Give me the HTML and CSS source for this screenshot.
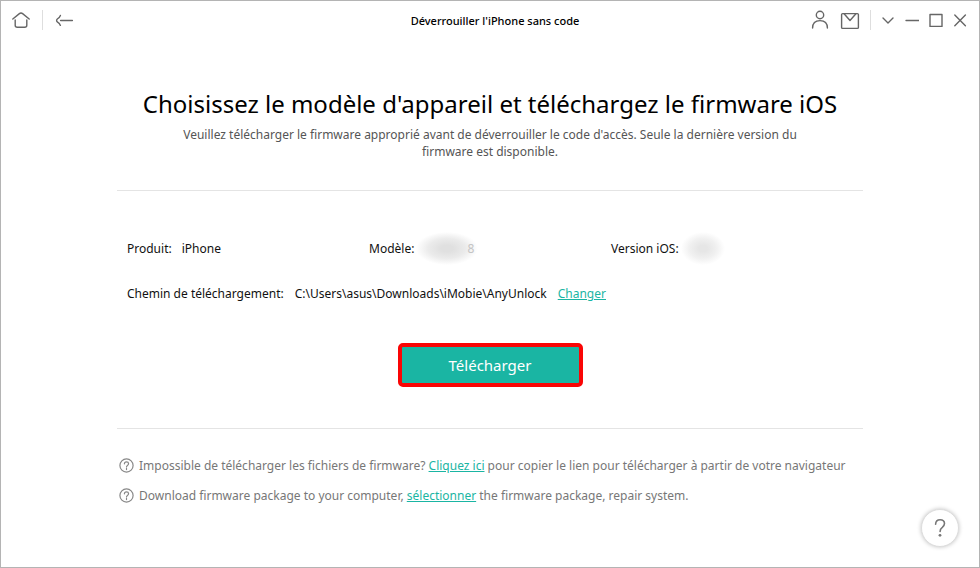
FILE: index.html
```html
<!DOCTYPE html>
<html lang="fr">
<head>
  <meta charset="UTF-8">
  <meta name="viewport" content="width=device-width, initial-scale=1.0">
  <title>Déverrouiller l'iPhone sans code</title>
  <link rel="stylesheet" href="styles.css">
</head>
<body>
  <div class="window">
    <header class="titlebar">
      <div class="nav">
        <button class="icon-btn" aria-label="Accueil">
          <svg width="20" height="20" viewBox="0 0 20 20"><path d="M1.8 9 8.4 3.6Q10 2.3 11.6 3.6L18.2 9M4.2 10v5.2q0 2 2 2h7.6q2 0 2-2V10"/></svg>
        </button>
        <span class="divider"></span>
        <button class="icon-btn" aria-label="Retour">
          <svg width="20" height="20" viewBox="0 0 20 20"><path d="M6.4 5.4Q5.6 7.4 3.6 8.8 1.6 10.5 3.6 12.2 5.6 13.4 6.4 15.4M6.6 10.5H18.4"/></svg>
        </button>
      </div>
      <h1 class="title">Déverrouiller l'iPhone sans code</h1>
      <div class="tools">
        <button class="icon-btn" aria-label="Compte">
          <svg width="20" height="20" viewBox="0 0 20 20"><circle cx="10" cy="5" r="3.7"/><path d="M2.6 18q0-7.4 7.4-7.4t7.4 7.4"/></svg>
        </button>
        <button class="icon-btn" aria-label="Messages">
          <svg width="20" height="20" viewBox="0 0 20 20"><rect x="1.6" y="3.6" width="16.8" height="14.8" rx="1"/><path d="m4.3 4 5.7 6.5L15.7 4"/></svg>
        </button>
        <span class="divider"></span>
        <button class="icon-btn" aria-label="Menu">
          <svg width="14" height="14" viewBox="0 0 14 14"><path d="m2 5 5 5 5-5"/></svg>
        </button>
        <button class="icon-btn" aria-label="Réduire">
          <svg width="14" height="14" viewBox="0 0 14 14"><path d="M1 7.5h13"/></svg>
        </button>
        <button class="icon-btn" aria-label="Agrandir">
          <svg width="14" height="14" viewBox="0 0 14 14"><rect x="1" y="1.5" width="12" height="12"/></svg>
        </button>
        <button class="icon-btn" aria-label="Fermer">
          <svg width="14" height="14" viewBox="0 0 14 14"><path d="m1.8 2 10.6 10.8M12.4 2 1.8 12.8"/></svg>
        </button>
      </div>
    </header>

    <main class="content">
      <section class="intro">
        <h2>Choisissez le modèle d'appareil et téléchargez le firmware iOS</h2>
        <p>Veuillez télécharger le firmware approprié avant de déverrouiller le code d'accès. Seule la dernière version du firmware est disponible.</p>
      </section>

      <section class="details">
        <div class="specs">
          <div class="spec"><span>Produit:</span><span>iPhone</span></div>
          <div class="spec masked"><span>Modèle:</span><span class="mask">8</span></div>
          <div class="spec masked"><span>Version iOS:</span><span class="mask mask-small"></span></div>
        </div>
        <div class="path">
          <span>Chemin de téléchargement:</span>
          <span>C:\Users\asus\Downloads\iMobie\AnyUnlock</span>
          <a href="#">Changer</a>
        </div>
        <button class="download">Télécharger</button>
      </section>

      <section class="hints">
        <p>
          <svg class="hint-icon" width="15" height="15" viewBox="0 0 15 15"><circle cx="7.5" cy="7.5" r="6.6"/><path d="M5.4 5.8q.1-2 2.1-2t2.1 1.8q0 1-1.1 1.8-1 .7-1 1.6M7.5 10.4v1.2"/></svg>
          <span>Impossible de télécharger les fichiers de firmware? <a href="#">Cliquez ici</a> pour copier le lien pour télécharger à partir de votre navigateur</span>
        </p>
        <p>
          <svg class="hint-icon" width="15" height="15" viewBox="0 0 15 15"><circle cx="7.5" cy="7.5" r="6.6"/><path d="M5.4 5.8q.1-2 2.1-2t2.1 1.8q0 1-1.1 1.8-1 .7-1 1.6M7.5 10.4v1.2"/></svg>
          <span>Download firmware package to your computer, <a href="#">sélectionner</a> the firmware package, repair system.</span>
        </p>
      </section>
    </main>

    <button class="help" aria-label="Aide">
      <svg width="20" height="20" viewBox="0 0 20 20"><path d="M5.6 6.2q.2-4.4 4.5-4.4t4.4 3.8q0 1.9-2.2 3.7-2.2 1.7-2.2 4.1"/><circle class="dot" cx="10" cy="17.3" r="1.4"/></svg>
    </button>
  </div>
</body>
</html>
```
FILE: styles.css
```css
* {
  box-sizing: border-box;
}
body {
  margin: 0;
  font-family: "Noto Sans", "Open Sans", sans-serif;
  font-size: 12px;
  line-height: 17px;
  color: #111;
  background: #fff;
}
h1, h2, p {
  margin: 0;
}
a {
  color: #1ab5a3;
  text-decoration: underline;
}
button {
  padding: 0;
  border: none;
  background: none;
  font-family: inherit;
  cursor: pointer;
}
svg {
  display: block;
  fill: none;
  stroke: #666;
  stroke-width: 1.4;
  stroke-linecap: round;
  stroke-linejoin: round;
}
.window {
  min-height: 100vh;
  border: 1px solid #b4b4b4;
}

/* title bar */
.titlebar {
  display: grid;
  grid-template-columns: 1fr auto 1fr;
  align-items: center;
  height: 38px;
  padding: 0 12px 0 10px;
}
.nav,
.tools {
  display: flex;
  align-items: center;
  gap: 11px;
}
.tools {
  justify-content: flex-end;
  gap: 10px;
}
.divider {
  width: 1px;
  height: 20px;
  background: #dedede;
}
.title {
  padding-left: 12px;
  font-size: 11px;
  font-weight: 500;
  color: #000;
}

/* main panel */
.content {
  max-width: 746px;
  margin: 0 auto;
}
.intro {
  padding: 48px 0 30px;
  text-align: center;
  border-bottom: 1px solid #e4e4e4;
}
.intro h2 {
  margin: 0 0 5px;
  font-size: 24px;
  line-height: 34px;
  font-weight: 400;
  color: #000;
}
.intro p {
  max-width: 650px;
  margin: 0 auto;
  color: #555;
}
.details {
  padding: 49px 10px 41px;
  border-bottom: 1px solid #e4e4e4;
}
.specs {
  display: grid;
  grid-template-columns: 1fr 1fr 1fr;
}
.spec {
  display: flex;
  gap: 10px;
}
.masked {
  gap: 2px;
}
.mask {
  width: 62px;
  margin: -8px 0;
  padding: 8px 4px;
  text-align: right;
  color: #c4c4c4;
  background: radial-gradient(closest-side, #e0e0e0 20%, #ebebeb 60%, transparent);
}
.mask-small {
  width: 44px;
  background: radial-gradient(closest-side, #e6e6e6 20%, #f0f0f0 60%, transparent);
}
.path {
  display: flex;
  gap: 11px;
  margin-top: 28px;
}
.download {
  display: block;
  width: 185px;
  height: 44px;
  margin: 41px auto 0;
  border: 4px solid #fa0505;
  border-radius: 5px;
  background: #1ab5a3;
  color: #fff;
  font-size: 15px;
}
.hints {
  display: grid;
  gap: 13px;
  padding-top: 28px;
  color: #777;
}
.hints p {
  display: flex;
  align-items: center;
  gap: 5px;
  padding-left: 2px;
}
.hint-icon {
  flex: none;
  stroke: #888;
  stroke-width: 1.2;
}

/* floating help button */
.help {
  position: fixed;
  right: 21px;
  bottom: 21px;
  display: grid;
  place-items: center;
  width: 38px;
  height: 38px;
  border: 1px solid #ddd;
  border-radius: 50%;
  background: #fff;
  box-shadow: 0 0 4px rgba(0, 0, 0, 0.25);
}
.help svg {
  stroke: #777;
  stroke-width: 1.6;
}
.help .dot {
  fill: #777;
  stroke: none;
}
```
